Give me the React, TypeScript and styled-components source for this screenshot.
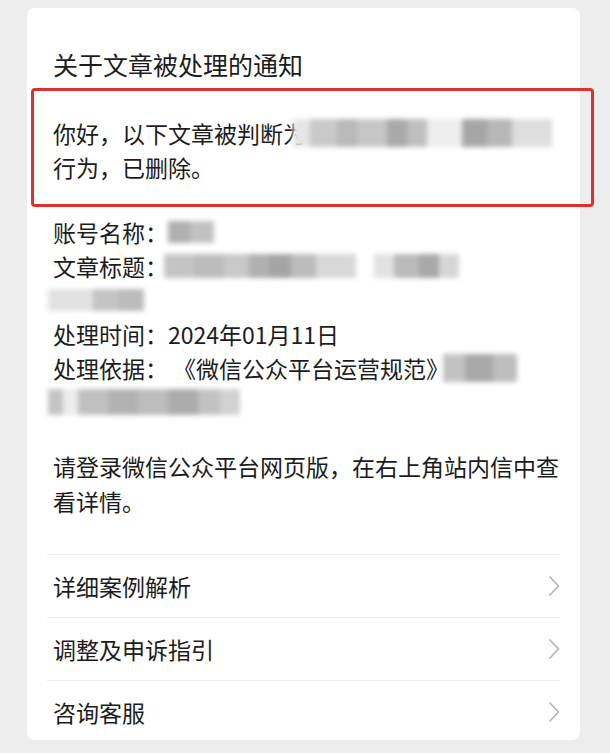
import React from 'react';
import styled, { createGlobalStyle } from 'styled-components';

const GlobalStyle = createGlobalStyle`
  html, body {
    margin: 0;
    padding: 0;
    background: #ededed;
  }
  body {
    font-family: "Noto Sans CJK SC", "Noto Sans", sans-serif;
    color: #1c1c1c;
  }
`;

const Page = styled.div`
  width: 610px;
  height: 753px;
  padding: 8px 30px 0 27px;
  box-sizing: border-box;
  background: #ededed;
`;

const Card = styled.div`
  background: #ffffff;
  border-radius: 8px;
  padding: 39px 26px 0;
  height: 732px;
  box-sizing: border-box;
`;

const Title = styled.div`
  font-size: 25px;
  line-height: 34px;
  white-space: nowrap;
`;

const Highlight = styled.div`
  margin: 7px -40px 0 -22px;
  border: 3px solid #e0302a;
  border-radius: 4px;
  padding: 25px 0 20px 19px;
  font-size: 23px;
  line-height: 37px;
  white-space: nowrap;
`;

const Info = styled.div`
  margin-top: 8px;
  font-size: 23px;
  line-height: 34px;
  white-space: nowrap;
`;

const Line = styled.div`
  display: flex;
  align-items: center;
  height: 34px;
`;

const Quote = styled.span`
  margin-left: 5px;
`;

const Smudge = styled.span<{ $h: number; $shift?: number }>`
  display: inline-flex;
  vertical-align: middle;
  height: ${(p) => p.$h}px;
  margin-left: ${(p) => p.$shift ?? 0}px;
  filter: blur(2.5px);
`;

const Cell = styled.span<{ $tone: string }>`
  display: block;
  height: 100%;
  background: ${(p) => p.$tone};
`;

const Note = styled.p`
  margin: 30px 0 0;
  font-size: 23px;
  line-height: 35px;
  white-space: nowrap;
`;

const Menu = styled.div`
  margin: 35px -6px 0;
`;

const MenuRow = styled.div`
  display: flex;
  align-items: center;
  justify-content: space-between;
  height: 62px;
  border-top: 1px solid #ececec;
  padding-left: 6px;
  font-size: 23px;
`;

type Seg = [number, string];

function Blur({ segs, h = 26, shift }: { segs: Seg[]; h?: number; shift?: number }) {
  return (
    <Smudge $h={h} $shift={shift}>
      {segs.map(([w, c], i) => (
        <Cell key={i} $tone={c} style={{ width: w }} />
      ))}
    </Smudge>
  );
}

function Chevron() {
  return (
    <svg width="12" height="22" viewBox="0 0 12 22">
      <polyline points="1.5,1.5 10.5,11 1.5,20.5" fill="none" stroke="#b4b4b4" strokeWidth="1.6" />
    </svg>
  );
}

const judged: Seg[] = [
  [17, '#e6e6e6'], [27, '#c9c9c9'], [20, '#b9b9b9'], [30, '#c6c6c6'], [20, '#a9a9a9'],
  [20, '#bfbfbf'], [35, '#eeeeee'], [25, '#a6a6a6'], [25, '#b7b7b7'], [40, '#dedede'],
];

export default function App() {
  return (
    <>
      <GlobalStyle />
      <Page>
        <Card>
          <Title>关于文章被处理的通知</Title>
          <Highlight>
            <Line>
              你好，以下文章被判断为
              <Blur segs={judged} h={28} shift={-13} />
            </Line>
            <Line>行为，已删除。</Line>
          </Highlight>
          <Info>
            <Line>
              账号名称：
              <Blur segs={[[22, '#b0b0b0'], [24, '#c2c2c2']]} h={22} />
            </Line>
            <Line>
              文章标题：
              <Blur
                segs={[
                  [30, '#c4c4c4'], [30, '#bcbcbc'], [25, '#c8c8c8'], [20, '#b0b0b0'], [22, '#a4a4a4'],
                  [25, '#bcbcbc'], [40, '#d8d8d8'], [18, '#ffffff'], [20, '#e2e2e2'], [25, '#bababa'],
                  [20, '#a9a9a9'], [20, '#d6d6d6'],
                ]}
                h={24}
                shift={-4}
              />
            </Line>
            <Line>
              <Blur segs={[[45, '#e2e2e2'], [25, '#c4c4c4'], [26, '#bcbcbc']]} h={22} shift={-5} />
            </Line>
            <Line>处理时间：2024年01月11日</Line>
            <Line>
              处理依据：<Quote>《微信公众平台运营规范》</Quote>
              <Blur segs={[[22, '#c2c2c2'], [28, '#a8a8a8'], [24, '#bdbdbd']]} h={28} shift={-6} />
            </Line>
            <Line>
              <Blur
                segs={[
                  [15, '#c4c4c4'], [15, '#ececec'], [30, '#c0c0c0'], [30, '#b2b2b2'], [30, '#bdbdbd'],
                  [30, '#acacac'], [22, '#c2c2c2'], [20, '#d2d2d2'],
                ]}
                h={26}
                shift={-5}
              />
            </Line>
          </Info>
          <Note>
            请登录微信公众平台网页版，在右上角站内信中查
            <br />
            看详情。
          </Note>
          <Menu>
            {['详细案例解析', '调整及申诉指引', '咨询客服'].map((t) => (
              <MenuRow key={t}>
                {t}
                <Chevron />
              </MenuRow>
            ))}
          </Menu>
        </Card>
      </Page>
    </>
  );
}
